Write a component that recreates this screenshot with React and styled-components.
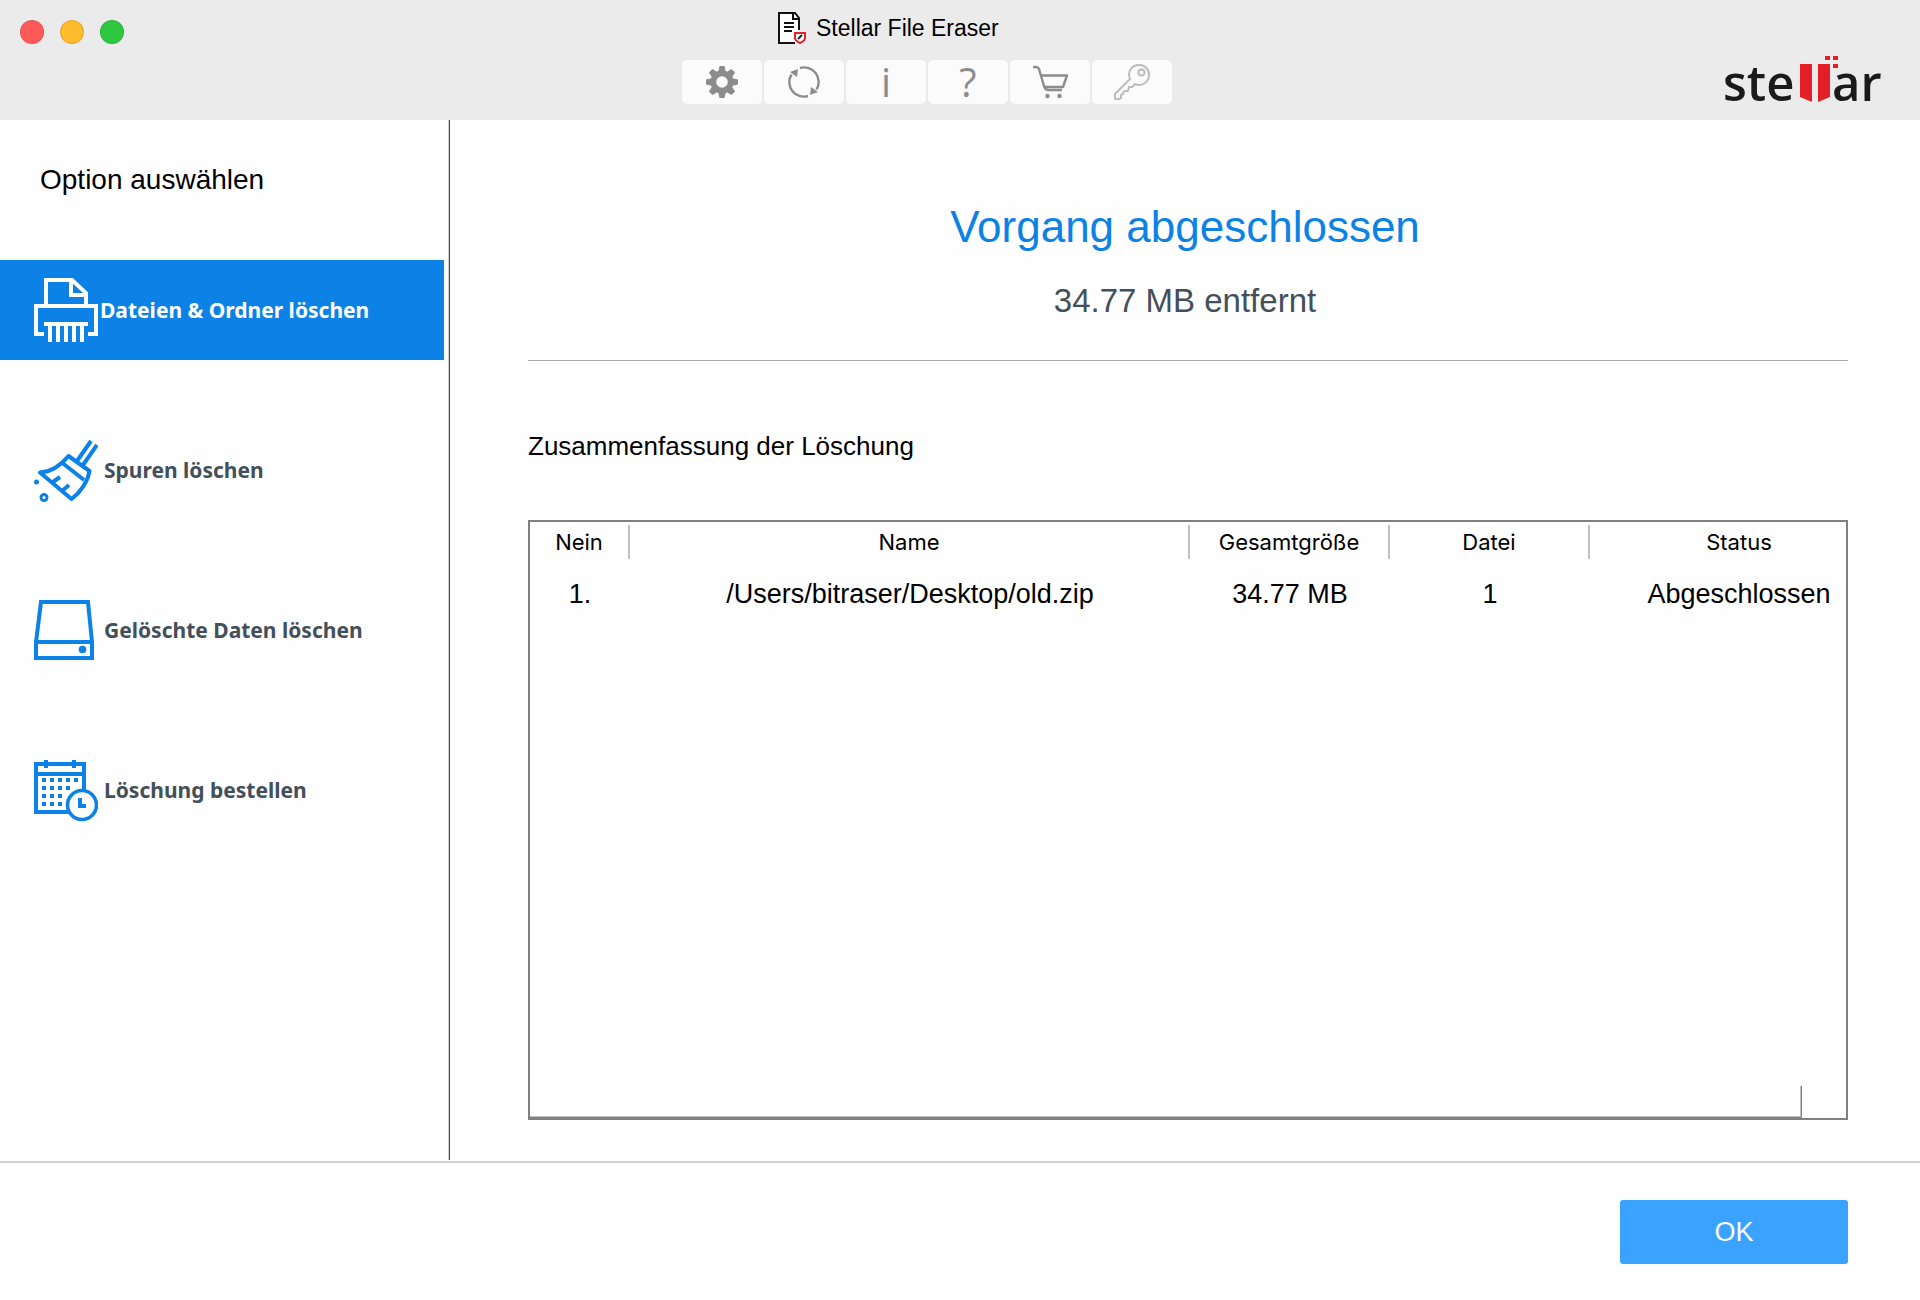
import React, { useState } from "react";
import styled, { createGlobalStyle } from "styled-components";

const GlobalStyle = createGlobalStyle`
  * {
    box-sizing: border-box;
  }

  body {
    margin: 0;
    background: #fefefe;
    color: #000;
    font-family: "Liberation Sans", Arial, sans-serif;
  }

  button {
    border: 0;
    padding: 0;
    font: inherit;
    cursor: pointer;
  }

  svg {
    display: block;
    flex: none;
  }
`;

const Window = styled.div`
  display: flex;
  flex-direction: column;
  min-height: 100vh;
`;

const Header = styled.header`
  display: grid;
  grid-template-columns: 682fr auto 748fr;
  height: 120px;
  background: #ebebeb;
`;

const WindowButtons = styled.div`
  display: flex;
  gap: 16px;
  padding: 20px;
`;

const WindowButton = styled.button`
  width: 24px;
  height: 24px;
  border: 1px solid rgba(0, 0, 0, 0.1);
  border-radius: 50%;
  background: ${(props) => props.$color};
`;

const HeaderCenter = styled.div`
  padding-top: 12px;
`;

const AppTitle = styled.div`
  display: flex;
  align-items: center;
  gap: 10px;
  height: 32px;
  margin-bottom: 16px;
  padding-left: 96px;
  font-size: 23px;
`;

const Toolbar = styled.div`
  display: flex;
  gap: 2px;
`;

const ToolButton = styled.button`
  display: flex;
  align-items: center;
  justify-content: center;
  width: 80px;
  height: 44px;
  border-radius: 5px;
  background: #fbfbfb;
  color: ${(props) => (props.$faded ? "#bdbdbd" : "#8c8c8c")};
`;

const ToolGlyph = styled.span`
  font-family: "Open Sans", sans-serif;
  font-size: 40px;
  line-height: 44px;
`;

const Brand = styled.div`
  display: flex;
  justify-content: flex-end;
  padding: 44px 36px 0 0;
`;

const Body = styled.div`
  display: flex;
  flex: 1;
`;

const Sidebar = styled.aside`
  flex: none;
  width: 450px;
  padding: 40px 4px 0 0;
  border-right: 1px solid #484848;
  box-shadow: inset -1px 0 0 #cfcfcf;
`;

const SidebarTitle = styled.h2`
  margin: 0 0 60px 40px;
  font-size: 28px;
  font-weight: 400;
  line-height: 40px;
`;

const Nav = styled.nav`
  display: flex;
  flex-direction: column;
  gap: 60px;
`;

const NavItem = styled.button`
  display: flex;
  align-items: center;
  gap: ${(props) => (props.$active ? "2px" : "6px")};
  height: 100px;
  margin-right: 1px;
  padding-left: 34px;
  background: ${(props) => (props.$active ? "#0c82e6" : "transparent")};
  color: ${(props) => (props.$active ? "#fff" : "#434f59")};
  font-family: "Noto Sans", sans-serif;
  font-size: 21px;
  font-weight: 700;
  text-align: left;

  svg {
    color: ${(props) => (props.$active ? "#fff" : "#0c82e6")};
  }
`;

const Main = styled.main`
  display: flex;
  flex: 1;
  flex-direction: column;
  min-width: 0;
  padding-bottom: 40px;
`;

const Result = styled.section`
  padding-top: 81px;
  text-align: center;
`;

const ResultTitle = styled.h1`
  margin: 0 0 28px;
  color: #0c82e6;
  font-size: 44px;
  font-weight: 400;
  line-height: 52px;
`;

const ResultText = styled.p`
  margin: 0 0 39px;
  color: #434f59;
  font-size: 33px;
  line-height: 40px;
`;

const Divider = styled.hr`
  height: 1px;
  margin: 0 72px 0 78px;
  border: 0;
  background: #a9a9a9;
`;

const Summary = styled.section`
  display: flex;
  flex: 1;
  flex-direction: column;
  padding: 69px 72px 0 78px;
`;

const SummaryTitle = styled.h2`
  margin: 0 0 58px;
  font-size: 26px;
  font-weight: 400;
  line-height: 32px;
`;

const TableFrame = styled.div`
  display: flex;
  flex: 1;
  flex-direction: column;
  justify-content: space-between;
  padding-top: 3px;
  border: 2px solid #808080;
`;

const Table = styled.table`
  width: 100%;
  border-collapse: separate;
  border-spacing: 0;
  table-layout: fixed;
`;

const HeadCell = styled.th`
  width: ${(props) => props.$width};
  height: 34px;
  padding: 0;
  border-right: 2px solid #c0c0c0;
  font-family: Inter, sans-serif;
  font-size: 22px;
  font-weight: 400;
  line-height: 30px;

  &:last-child {
    padding-left: 42px;
    border-right: 0;
  }
`;

const Cell = styled.td`
  height: 70px;
  padding: 0;
  font-size: 27px;
  text-align: center;
  white-space: nowrap;

  &:last-child {
    padding-left: 42px;
  }
`;

const ScrollCorner = styled.div`
  height: 32px;
  margin-right: 44px;
  border-right: 1px solid #808080;
  border-bottom: 1px solid #808080;
  box-shadow: inset -1px -1px 0 #c0c0c0;
`;

const Footer = styled.footer`
  display: flex;
  justify-content: flex-end;
  margin-top: 1px;
  padding: 37px 72px 36px;
  border-top: 2px solid #d3d3d3;
`;

const OkButton = styled.button`
  width: 228px;
  height: 64px;
  border-radius: 3px;
  background: #39a3ff;
  color: #fff;
  font-size: 27px;
`;

const AppIcon = () => (
  <svg width="28" height="32" viewBox="0 0 28 32" fill="none">
    <path d="M1 1H17L21 5V31H1Z" fill="#fff" />
    <path d="M17 31H1V1H17L21 6V18" stroke="#111" strokeWidth="2" />
    <path d="M15 1V7H21" stroke="#111" strokeWidth="2" />
    <path d="M6 11H16M6 15H16M6 19H14" stroke="#111" strokeWidth="2" />
    <path
      d="M17 21H27V26C27 29 24 30 22 31C20 30 17 29 17 26Z"
      fill="#fff"
      stroke="#e0202a"
      strokeWidth="2"
    />
    <path d="M20 27L24 23" stroke="#222" strokeWidth="2" />
  </svg>
);

const GearIcon = () => (
  <svg width="32" height="32" viewBox="-16 -16 32 32" fill="currentColor">
    {[0, 45, 90, 135].map((angle) => (
      <path
        key={angle}
        d="M-2.5 -16H2.5L4 -9V9L2.5 16H-2.5L-4 9V-9Z"
        transform={`rotate(${angle})`}
      />
    ))}
    <circle r="11.5" />
    <circle r="5.8" fill="#fbfbfb" />
  </svg>
);

const RefreshIcon = () => (
  <svg width="32" height="32" viewBox="-16 -16 32 32" fill="none">
    <g stroke="currentColor" strokeWidth="2.4">
      <path d="M-4 -14A14.5 14.5 0 0 1 12.5 7.5" />
      <path d="M4 14A14.5 14.5 0 0 1 -12.5 -7.5" />
    </g>
    <path d="M-14 -10L-6 -13L-7 -5Z" fill="currentColor" />
    <path d="M14 10L6 13L7 5Z" fill="currentColor" />
  </svg>
);

const CartIcon = () => (
  <svg width="40" height="36" viewBox="20 4 40 36" fill="none">
    <g stroke="currentColor" strokeWidth="2.4" strokeLinejoin="round">
      <path d="M23 7H26Q28 7 29 9L34 26Q35 30 38 30H52" />
      <path d="M31 15.5H57L53 27H34" />
    </g>
    <circle cx="37.5" cy="36" r="2.2" fill="currentColor" />
    <circle cx="49.5" cy="36" r="2.2" fill="currentColor" />
  </svg>
);

const KeyIcon = () => (
  <svg width="40" height="40" viewBox="20 2 40 40" fill="none">
    <g stroke="currentColor" strokeWidth="2" strokeLinejoin="round">
      <path d="M38 19C35 11 40 5 47 5C53 5 57 9 57 15C57 22 50 27 43 24L40 27H37L36 31H32L31 34L29 35V38L27 39H23V34Z" />
      <circle cx="49.5" cy="12.5" r="3" />
    </g>
  </svg>
);

const StellarLogo = () => (
  <svg width="164" height="76" viewBox="0 -6 164 76" role="img">
    <g
      fill="#1a1a1a"
      fontFamily="Open Sans, sans-serif"
      fontSize="49"
      fontWeight="600"
    >
      <text x="3" y="51">
        ste
      </text>
      <text x="112" y="51">
        ar
      </text>
    </g>
    <g fill="#e31e26">
      <path d="M80 14H92V52L80 47Z" />
      <path d="M98 14H110V47L98 52Z" />
      <rect x="105" y="6" width="5" height="4" />
      <rect x="113" y="6" width="5" height="4" />
      <rect x="113" y="14" width="5" height="4" />
    </g>
  </svg>
);

const ShredderIcon = () => (
  <svg width="64" height="64" viewBox="0 0 64 64" fill="none">
    <g stroke="currentColor" strokeWidth="4">
      <path d="M12 28V2H38L52 15V28" />
      <path d="M37 2V17H52" />
      <path d="M10 56H2V28H62V56H54" />
      <path d="M10 46H54" />
      <path d="M16 46V64M24 46V64M32 46V64M40 46V64M48 46V64" />
    </g>
  </svg>
);

const BroomIcon = () => (
  <svg width="64" height="64" viewBox="0 0 64 64" fill="none">
    <g stroke="currentColor" strokeWidth="4" strokeLinejoin="round">
      <path d="M43 23L57 3M49 27L63 7" />
      <path d="M34.5 18L55.5 33C54 43 47 54 37.5 61L6 34.5C18 34 27 27 34.5 18Z" />
      <path d="M28.5 25L50 42" />
      <path d="M26 39L19 44M35 47L28 53" />
    </g>
    <circle cx="2.5" cy="44" r="2.5" fill="currentColor" />
    <circle cx="10" cy="59.5" r="3" stroke="currentColor" strokeWidth="3" />
  </svg>
);

const DriveIcon = () => (
  <svg width="64" height="64" viewBox="0 0 64 64" fill="none">
    <g stroke="currentColor" strokeWidth="4">
      <path d="M2 44L7 4H54L58 44V60H2Z" />
      <path d="M2 44H58" />
    </g>
    <circle cx="48.5" cy="51.5" r="3.8" fill="currentColor" />
  </svg>
);

// dots per calendar row, the clock covers the lower right ones
const calendarRows = [5, 4, 3, 3];

const CalendarIcon = () => (
  <svg width="64" height="64" viewBox="0 0 64 64" fill="none">
    <g stroke="currentColor" strokeWidth="4">
      <path d="M2 6H50V54H2Z" />
      <path d="M2 16H50" />
      <path d="M12 2V10M40 2V10" />
    </g>
    {calendarRows.map((count, row) =>
      Array.from({ length: count }, (_, col) => (
        <rect
          key={`${row}-${col}`}
          x={8 + col * 8}
          y={20 + row * 8}
          width="4"
          height="4"
          fill="currentColor"
        />
      ))
    )}
    <circle
      cx="48"
      cy="47"
      r="14.5"
      fill="#fefefe"
      stroke="currentColor"
      strokeWidth="3.6"
    />
    <path d="M46 40V48H52" stroke="currentColor" strokeWidth="4" />
  </svg>
);

const windowButtons = [
  { label: "Schließen", color: "#ff5a58" },
  { label: "Minimieren", color: "#febc2c" },
  { label: "Maximieren", color: "#2dc840" },
];

const tools = [
  { label: "Einstellungen", icon: <GearIcon /> },
  { label: "Aktualisieren", icon: <RefreshIcon /> },
  { label: "Info", icon: <ToolGlyph>i</ToolGlyph> },
  { label: "Hilfe", icon: <ToolGlyph>?</ToolGlyph> },
  { label: "Kaufen", icon: <CartIcon /> },
  { label: "Aktivieren", icon: <KeyIcon />, faded: true },
];

const options = [
  { label: "Dateien & Ordner löschen", icon: <ShredderIcon /> },
  { label: "Spuren löschen", icon: <BroomIcon /> },
  { label: "Gelöschte Daten löschen", icon: <DriveIcon /> },
  { label: "Löschung bestellen", icon: <CalendarIcon /> },
];

const columns = [
  { label: "Nein", width: "100px" },
  { label: "Name", width: "auto" },
  { label: "Gesamtgröße", width: "200px" },
  { label: "Datei", width: "200px" },
  { label: "Status", width: "256px" },
];

const rows = [
  ["1.", "/Users/bitraser/Desktop/old.zip", "34.77 MB", "1", "Abgeschlossen"],
];

const App = () => {
  const [active, setActive] = useState(0);

  return (
    <Window>
      <GlobalStyle />
      <Header>
        <WindowButtons>
          {windowButtons.map((button) => (
            <WindowButton
              key={button.label}
              $color={button.color}
              aria-label={button.label}
            />
          ))}
        </WindowButtons>
        <HeaderCenter>
          <AppTitle>
            <AppIcon />
            Stellar File Eraser
          </AppTitle>
          <Toolbar>
            {tools.map((tool) => (
              <ToolButton
                key={tool.label}
                $faded={tool.faded}
                aria-label={tool.label}
              >
                {tool.icon}
              </ToolButton>
            ))}
          </Toolbar>
        </HeaderCenter>
        <Brand>
          <StellarLogo />
        </Brand>
      </Header>

      <Body>
        <Sidebar>
          <SidebarTitle>Option auswählen</SidebarTitle>
          <Nav>
            {options.map((option, index) => (
              <NavItem
                key={option.label}
                $active={index === active}
                onClick={() => setActive(index)}
              >
                {option.icon}
                {option.label}
              </NavItem>
            ))}
          </Nav>
        </Sidebar>

        <Main>
          <Result>
            <ResultTitle>Vorgang abgeschlossen</ResultTitle>
            <ResultText>34.77 MB entfernt</ResultText>
          </Result>
          <Divider />
          <Summary>
            <SummaryTitle>Zusammenfassung der Löschung</SummaryTitle>
            <TableFrame>
              <Table>
                <thead>
                  <tr>
                    {columns.map((column) => (
                      <HeadCell key={column.label} $width={column.width}>
                        {column.label}
                      </HeadCell>
                    ))}
                  </tr>
                </thead>
                <tbody>
                  {rows.map((row) => (
                    <tr key={row[0]}>
                      {row.map((value, index) => (
                        <Cell key={columns[index].label}>{value}</Cell>
                      ))}
                    </tr>
                  ))}
                </tbody>
              </Table>
              <ScrollCorner />
            </TableFrame>
          </Summary>
        </Main>
      </Body>

      <Footer>
        <OkButton>OK</OkButton>
      </Footer>
    </Window>
  );
};

export default App;
